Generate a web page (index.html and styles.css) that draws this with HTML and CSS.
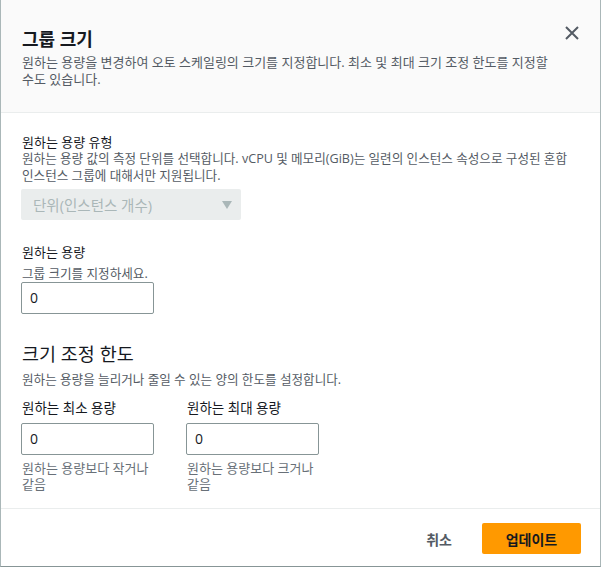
FILE: index.html
```html
<!DOCTYPE html>
<html lang="ko">
<head>
<meta charset="utf-8">
<title>그룹 크기</title>
<link rel="stylesheet" href="styles.css">
</head>
<body>
<div class="modal">
  <header class="modal-header">
    <div class="header-text">
      <h2 class="title">그룹 크기</h2>
      <p class="header-desc">원하는 용량을 변경하여 오토 스케일링의 크기를 지정합니다. 최소 및 최대 크기 조정 한도를 지정할 수도 있습니다.</p>
    </div>
    <button class="close" aria-label="닫기">
      <svg width="14" height="14" viewBox="0 0 14 14"><path d="M1 1L13 13M13 1L1 13" stroke="#545b64" stroke-width="2" fill="none"/></svg>
    </button>
  </header>
  <main class="modal-body">
    <section class="field field-type">
      <div class="label">원하는 용량 유형</div>
      <p class="desc">원하는 용량 값의 측정 단위를 선택합니다. vCPU 및 메모리(GiB)는 일련의 인스턴스 속성으로 구성된 혼합 인스턴스 그룹에 대해서만 지원됩니다.</p>
      <div class="select">
        <span>단위(인스턴스 개수)</span>
        <span class="caret"></span>
      </div>
    </section>
    <section class="field field-cap">
      <div class="label">원하는 용량</div>
      <p class="desc desc-cap">그룹 크기를 지정하세요.</p>
      <div class="input">0</div>
    </section>
    <section class="limits">
      <h3 class="limits-title">크기 조정 한도</h3>
      <p class="desc desc-limits">원하는 용량을 늘리거나 줄일 수 있는 양의 한도를 설정합니다.</p>
      <div class="cols">
        <div class="col">
          <div class="label">원하는 최소 용량</div>
          <div class="input input-col">0</div>
          <p class="help">원하는 용량보다 작거나 같음</p>
        </div>
        <div class="col">
          <div class="label">원하는 최대 용량</div>
          <div class="input input-col">0</div>
          <p class="help">원하는 용량보다 크거나 같음</p>
        </div>
      </div>
    </section>
  </main>
  <footer class="modal-footer">
    <button class="btn-cancel">취소</button>
    <button class="btn-primary">업데이트</button>
  </footer>
</div>
</body>
</html>
```
FILE: styles.css
```css
* { box-sizing: border-box; }
html, body { margin: 0; padding: 0; background: #ffffff; }
body {
  font-family: "Open Sans", "Noto Sans CJK KR", sans-serif;
  color: #16191f;
  word-break: keep-all;
}
p { margin: 0; }
h2, h3 { margin: 0; }

.modal {
  width: 601px;
  height: 567px;
  border-left: 1px solid #aab7b8;
  border-right: 1px solid #aab7b8;
  border-bottom: 1px solid #879596;
  display: flex;
  flex-direction: column;
  background: #fff;
}

.modal-header {
  background: #fafafa;
  border-bottom: 1px solid #eaeded;
  padding: 28px 20px 24px 21px;
  display: flex;
  justify-content: space-between;
  align-items: flex-start;
}
.header-text { width: 540px; }
.title {
  font-size: 18px;
  font-weight: 700;
  line-height: 22px;
  color: #16191f;
}
.header-desc {
  margin-top: 4px;
  font-size: 13px;
  line-height: 17px;
  color: #545b64;
}
.close {
  border: 0;
  background: none;
  padding: 0;
  margin-top: -3px;
  width: 16px;
  height: 16px;
  display: flex;
  align-items: center;
  justify-content: center;
}

.modal-body {
  flex: 1;
  padding: 20px 20px 0 20px;
}
.label {
  font-size: 13px;
  line-height: 18px;
  color: #16191f;
  padding-left: 1px;
}
.desc {
  font-size: 12.6px;
  line-height: 17px;
  color: #545b64;
  padding-left: 1px;
}
.field-type .desc { margin-top: -1px; }
.select {
  margin-top: 5px;
  width: 220px;
  height: 31px;
  background: #eaeded;
  border-radius: 2px;
  display: flex;
  align-items: center;
  justify-content: space-between;
  padding: 0 9px 0 12px;
  font-size: 14.5px;
  color: #aab7b8;
}
.caret {
  width: 0;
  height: 0;
  border-left: 5px solid transparent;
  border-right: 5px solid transparent;
  border-top: 8px solid #aab7b8;
}

.field-cap { margin-top: 23px; }
.desc-cap { margin-top: 4px; }
.input {
  margin-top: 0;
  width: 133px;
  height: 32px;
  border: 1px solid #879596;
  border-radius: 2px;
  font-size: 14px;
  line-height: 30px;
  padding-left: 8px;
  color: #16191f;
}

.limits { margin-top: 28px; }
.limits-title {
  font-size: 18.5px;
  font-weight: 400;
  line-height: 24px;
  color: #16191f;
  padding-left: 1px;
}
.desc-limits { margin-top: 5px; }
.cols {
  margin-top: 11px;
  display: flex;
  gap: 32px;
}
.col { width: 133px; }
.col .label { font-size: 13.5px; }
.input-col { margin-top: 6px; }
.help {
  margin-top: 5px;
  font-size: 13px;
  line-height: 16px;
  color: #687078;
  padding-left: 1px;
}

.modal-footer {
  border-top: 1px solid #eaeded;
  height: 58px;
  padding: 14px 19px 0 0;
  display: flex;
  justify-content: flex-end;
  align-items: flex-start;
  gap: 30px;
}
.btn-cancel {
  border: 0;
  background: none;
  font-family: inherit;
  font-size: 14px;
  font-weight: 700;
  color: #545b64;
  height: 31px;
  padding: 0;
}
.btn-primary {
  border: 0;
  border-radius: 2px;
  background: #ff9900;
  font-family: inherit;
  font-size: 14px;
  font-weight: 700;
  color: #16191f;
  width: 99px;
  height: 31px;
  padding: 0;
}
```
